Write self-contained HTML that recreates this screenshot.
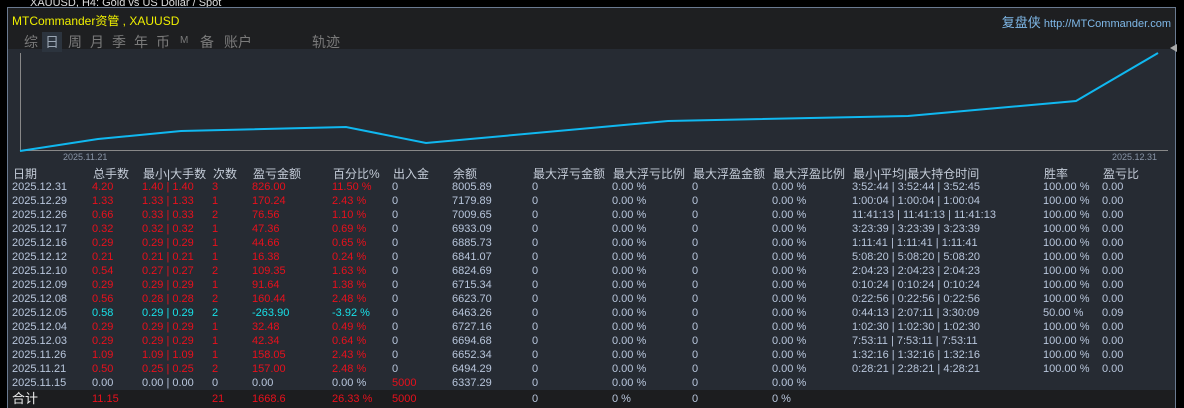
<!DOCTYPE html>
<html><head><meta charset="utf-8"><style>
body{margin:0;width:1184px;height:408px;background:#000;overflow:hidden;font-family:"Liberation Sans","Noto Sans CJK SC",sans-serif;position:relative}
.top{position:absolute;left:30px;top:-3px;color:#ddd;font-size:11px}
.panel{position:absolute;left:7px;top:7px;width:1169px;height:401px;background:#262b33;border:1px solid #6a7a90;border-bottom:none;box-sizing:border-box}
.hdr{position:absolute;left:0;top:0;width:100%;height:41px;background:#1e1f21}
.title{position:absolute;left:4px;top:4px;color:#f0f000;font-size:12px}
.brand{position:absolute;right:4px;top:4px;color:#7fb8e8;font-size:11px}
.brand b{font-weight:normal;font-size:13px}
.tab{position:absolute;top:24px;color:#7a7a7a;font-size:14px}
.sel{background:#2c343e;color:#9aa6b4;padding:0 3px;margin-left:-3px}
.r{position:absolute;left:0;width:100%;height:14px;font-size:11px;line-height:14px;color:#b8c6dc}
.r span{position:absolute;top:0;white-space:nowrap}
.h{font-size:12px;color:#c4ccd8}
.red{color:#e8101c}.cy{color:#18e0e8}
.tot{background:#1c1d1f;height:18px;line-height:18px}
</style></head><body>
<div class="top">XAUUSD, H4: Gold vs US Dollar / Spot</div>
<div class="panel">
<div class="hdr">
<div class="title">MTCommander资管 , XAUUSD</div>
<div class="brand"><b>复盘侠</b> http://MTCommander.com</div>
<span class="tab" style="left:16px">综</span><span class="tab sel" style="left:37px">日</span><span class="tab" style="left:60px">周</span><span class="tab" style="left:82px">月</span><span class="tab" style="left:104px">季</span><span class="tab" style="left:126px">年</span><span class="tab" style="left:148px">币</span><span class="tab" style="left:172px;font-size:10px;top:27px">M</span><span class="tab" style="left:192px">备</span><span class="tab" style="left:216px">账户</span><span class="tab" style="left:304px">轨迹</span>
</div>
<svg style="position:absolute;left:0;top:0" width="1169" height="160">
<line x1="12.5" y1="45" x2="12.5" y2="143" stroke="#888" />
<line x1="12" y1="142.5" x2="1160" y2="142.5" stroke="#888"/>
<polyline fill="none" stroke="#10b8f0" stroke-width="2" points="12,143 90,131 173,123 338,119 418,135 660,113 900,108 1068,93 1150,45"/>
<polygon points="1162,40 1169,36 1169,44" fill="#aaa"/>
<text x="55" y="152" fill="#8a96a8" font-size="9" font-family="Liberation Sans">2025.11.21</text>
<text x="1104" y="152" fill="#8a96a8" font-size="9" font-family="Liberation Sans">2025.12.31</text>
</svg>
<div style="position:absolute;left:-7px;top:0;width:1169px">
<div class="r h" style="top:159px"><span style="left:12px">日期</span><span style="left:92px">总手数</span><span style="left:142px">最小|大手数</span><span style="left:212px">次数</span><span style="left:252px">盈亏金额</span><span style="left:332px">百分比%</span><span style="left:392px">出入金</span><span style="left:452px">余额</span><span style="left:532px">最大浮亏金额</span><span style="left:612px">最大浮亏比例</span><span style="left:692px">最大浮盈金额</span><span style="left:772px">最大浮盈比例</span><span style="left:852px">最小|平均|最大持仓时间</span><span style="left:1043px">胜率</span><span style="left:1102px">盈亏比</span></div>
</div>
</div>
<div id="rows" style="position:absolute;left:0;top:0;width:1184px">
<div class="r" style="top:180px"><span style="left:12px">2025.12.31</span><span class="red" style="left:92px">4.20</span><span class="red" style="left:142px">1.40 | 1.40</span><span class="red" style="left:212px">3</span><span class="red" style="left:252px">826.00</span><span class="red" style="left:332px">11.50 %</span><span style="left:392px">0</span><span style="left:452px">8005.89</span><span style="left:532px">0</span><span style="left:612px">0.00 %</span><span style="left:692px">0</span><span style="left:772px">0.00 %</span><span style="left:852px">3:52:44 | 3:52:44 | 3:52:45</span><span style="left:1043px">100.00 %</span><span style="left:1102px">0.00</span></div>
<div class="r" style="top:194px"><span style="left:12px">2025.12.29</span><span class="red" style="left:92px">1.33</span><span class="red" style="left:142px">1.33 | 1.33</span><span class="red" style="left:212px">1</span><span class="red" style="left:252px">170.24</span><span class="red" style="left:332px">2.43 %</span><span style="left:392px">0</span><span style="left:452px">7179.89</span><span style="left:532px">0</span><span style="left:612px">0.00 %</span><span style="left:692px">0</span><span style="left:772px">0.00 %</span><span style="left:852px">1:00:04 | 1:00:04 | 1:00:04</span><span style="left:1043px">100.00 %</span><span style="left:1102px">0.00</span></div>
<div class="r" style="top:208px"><span style="left:12px">2025.12.26</span><span class="red" style="left:92px">0.66</span><span class="red" style="left:142px">0.33 | 0.33</span><span class="red" style="left:212px">2</span><span class="red" style="left:252px">76.56</span><span class="red" style="left:332px">1.10 %</span><span style="left:392px">0</span><span style="left:452px">7009.65</span><span style="left:532px">0</span><span style="left:612px">0.00 %</span><span style="left:692px">0</span><span style="left:772px">0.00 %</span><span style="left:852px">11:41:13 | 11:41:13 | 11:41:13</span><span style="left:1043px">100.00 %</span><span style="left:1102px">0.00</span></div>
<div class="r" style="top:222px"><span style="left:12px">2025.12.17</span><span class="red" style="left:92px">0.32</span><span class="red" style="left:142px">0.32 | 0.32</span><span class="red" style="left:212px">1</span><span class="red" style="left:252px">47.36</span><span class="red" style="left:332px">0.69 %</span><span style="left:392px">0</span><span style="left:452px">6933.09</span><span style="left:532px">0</span><span style="left:612px">0.00 %</span><span style="left:692px">0</span><span style="left:772px">0.00 %</span><span style="left:852px">3:23:39 | 3:23:39 | 3:23:39</span><span style="left:1043px">100.00 %</span><span style="left:1102px">0.00</span></div>
<div class="r" style="top:236px"><span style="left:12px">2025.12.16</span><span class="red" style="left:92px">0.29</span><span class="red" style="left:142px">0.29 | 0.29</span><span class="red" style="left:212px">1</span><span class="red" style="left:252px">44.66</span><span class="red" style="left:332px">0.65 %</span><span style="left:392px">0</span><span style="left:452px">6885.73</span><span style="left:532px">0</span><span style="left:612px">0.00 %</span><span style="left:692px">0</span><span style="left:772px">0.00 %</span><span style="left:852px">1:11:41 | 1:11:41 | 1:11:41</span><span style="left:1043px">100.00 %</span><span style="left:1102px">0.00</span></div>
<div class="r" style="top:250px"><span style="left:12px">2025.12.12</span><span class="red" style="left:92px">0.21</span><span class="red" style="left:142px">0.21 | 0.21</span><span class="red" style="left:212px">1</span><span class="red" style="left:252px">16.38</span><span class="red" style="left:332px">0.24 %</span><span style="left:392px">0</span><span style="left:452px">6841.07</span><span style="left:532px">0</span><span style="left:612px">0.00 %</span><span style="left:692px">0</span><span style="left:772px">0.00 %</span><span style="left:852px">5:08:20 | 5:08:20 | 5:08:20</span><span style="left:1043px">100.00 %</span><span style="left:1102px">0.00</span></div>
<div class="r" style="top:264px"><span style="left:12px">2025.12.10</span><span class="red" style="left:92px">0.54</span><span class="red" style="left:142px">0.27 | 0.27</span><span class="red" style="left:212px">2</span><span class="red" style="left:252px">109.35</span><span class="red" style="left:332px">1.63 %</span><span style="left:392px">0</span><span style="left:452px">6824.69</span><span style="left:532px">0</span><span style="left:612px">0.00 %</span><span style="left:692px">0</span><span style="left:772px">0.00 %</span><span style="left:852px">2:04:23 | 2:04:23 | 2:04:23</span><span style="left:1043px">100.00 %</span><span style="left:1102px">0.00</span></div>
<div class="r" style="top:278px"><span style="left:12px">2025.12.09</span><span class="red" style="left:92px">0.29</span><span class="red" style="left:142px">0.29 | 0.29</span><span class="red" style="left:212px">1</span><span class="red" style="left:252px">91.64</span><span class="red" style="left:332px">1.38 %</span><span style="left:392px">0</span><span style="left:452px">6715.34</span><span style="left:532px">0</span><span style="left:612px">0.00 %</span><span style="left:692px">0</span><span style="left:772px">0.00 %</span><span style="left:852px">0:10:24 | 0:10:24 | 0:10:24</span><span style="left:1043px">100.00 %</span><span style="left:1102px">0.00</span></div>
<div class="r" style="top:292px"><span style="left:12px">2025.12.08</span><span class="red" style="left:92px">0.56</span><span class="red" style="left:142px">0.28 | 0.28</span><span class="red" style="left:212px">2</span><span class="red" style="left:252px">160.44</span><span class="red" style="left:332px">2.48 %</span><span style="left:392px">0</span><span style="left:452px">6623.70</span><span style="left:532px">0</span><span style="left:612px">0.00 %</span><span style="left:692px">0</span><span style="left:772px">0.00 %</span><span style="left:852px">0:22:56 | 0:22:56 | 0:22:56</span><span style="left:1043px">100.00 %</span><span style="left:1102px">0.00</span></div>
<div class="r" style="top:306px"><span style="left:12px">2025.12.05</span><span class="cy" style="left:92px">0.58</span><span class="cy" style="left:142px">0.29 | 0.29</span><span class="cy" style="left:212px">2</span><span class="cy" style="left:252px">-263.90</span><span class="cy" style="left:332px">-3.92 %</span><span style="left:392px">0</span><span style="left:452px">6463.26</span><span style="left:532px">0</span><span style="left:612px">0.00 %</span><span style="left:692px">0</span><span style="left:772px">0.00 %</span><span style="left:852px">0:44:13 | 2:07:11 | 3:30:09</span><span style="left:1043px">50.00 %</span><span style="left:1102px">0.09</span></div>
<div class="r" style="top:320px"><span style="left:12px">2025.12.04</span><span class="red" style="left:92px">0.29</span><span class="red" style="left:142px">0.29 | 0.29</span><span class="red" style="left:212px">1</span><span class="red" style="left:252px">32.48</span><span class="red" style="left:332px">0.49 %</span><span style="left:392px">0</span><span style="left:452px">6727.16</span><span style="left:532px">0</span><span style="left:612px">0.00 %</span><span style="left:692px">0</span><span style="left:772px">0.00 %</span><span style="left:852px">1:02:30 | 1:02:30 | 1:02:30</span><span style="left:1043px">100.00 %</span><span style="left:1102px">0.00</span></div>
<div class="r" style="top:334px"><span style="left:12px">2025.12.03</span><span class="red" style="left:92px">0.29</span><span class="red" style="left:142px">0.29 | 0.29</span><span class="red" style="left:212px">1</span><span class="red" style="left:252px">42.34</span><span class="red" style="left:332px">0.64 %</span><span style="left:392px">0</span><span style="left:452px">6694.68</span><span style="left:532px">0</span><span style="left:612px">0.00 %</span><span style="left:692px">0</span><span style="left:772px">0.00 %</span><span style="left:852px">7:53:11 | 7:53:11 | 7:53:11</span><span style="left:1043px">100.00 %</span><span style="left:1102px">0.00</span></div>
<div class="r" style="top:348px"><span style="left:12px">2025.11.26</span><span class="red" style="left:92px">1.09</span><span class="red" style="left:142px">1.09 | 1.09</span><span class="red" style="left:212px">1</span><span class="red" style="left:252px">158.05</span><span class="red" style="left:332px">2.43 %</span><span style="left:392px">0</span><span style="left:452px">6652.34</span><span style="left:532px">0</span><span style="left:612px">0.00 %</span><span style="left:692px">0</span><span style="left:772px">0.00 %</span><span style="left:852px">1:32:16 | 1:32:16 | 1:32:16</span><span style="left:1043px">100.00 %</span><span style="left:1102px">0.00</span></div>
<div class="r" style="top:362px"><span style="left:12px">2025.11.21</span><span class="red" style="left:92px">0.50</span><span class="red" style="left:142px">0.25 | 0.25</span><span class="red" style="left:212px">2</span><span class="red" style="left:252px">157.00</span><span class="red" style="left:332px">2.48 %</span><span style="left:392px">0</span><span style="left:452px">6494.29</span><span style="left:532px">0</span><span style="left:612px">0.00 %</span><span style="left:692px">0</span><span style="left:772px">0.00 %</span><span style="left:852px">0:28:21 | 2:28:21 | 4:28:21</span><span style="left:1043px">100.00 %</span><span style="left:1102px">0.00</span></div>
<div class="r" style="top:376px"><span style="left:12px">2025.11.15</span><span style="left:92px">0.00</span><span style="left:142px">0.00 | 0.00</span><span style="left:212px">0</span><span style="left:252px">0.00</span><span style="left:332px">0.00 %</span><span class="red" style="left:392px">5000</span><span style="left:452px">6337.29</span><span style="left:532px">0</span><span style="left:612px">0.00 %</span><span style="left:692px">0</span><span style="left:772px">0.00 %</span></div>
<div class="r tot" style="top:390px;left:8px;width:1167px"><span style="left:4px;color:#eee;font-size:13px">合计</span><span class="red" style="left:84px">11.15</span><span class="red" style="left:204px">21</span><span class="red" style="left:244px">1668.6</span><span class="red" style="left:324px">26.33 %</span><span class="red" style="left:384px">5000</span><span style="left:524px">0</span><span style="left:604px">0 %</span><span style="left:684px">0</span><span style="left:764px">0 %</span></div>
</div>
</body></html>
